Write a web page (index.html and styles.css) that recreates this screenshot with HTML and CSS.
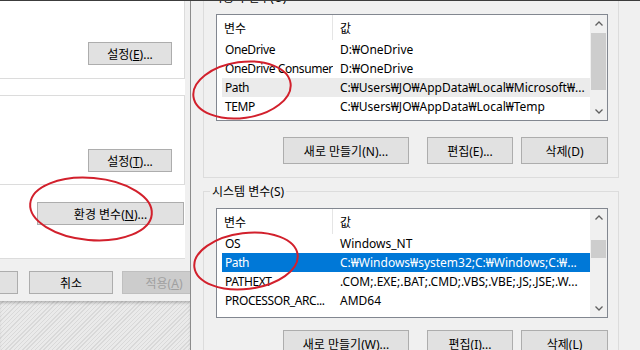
FILE: index.html
```html
<!DOCTYPE html>
<html lang="ko">
<head>
  <meta charset="UTF-8">
  <title>환경 변수</title>
  <link rel="stylesheet" href="styles.css">
</head>
<body>
  <div class="screen">
    <div class="sys-props">
      <div class="tab-page">
        <div class="group group-profile">
          <button class="btn btn-setting">설정(<u>E</u>)...</button>
        </div>
        <div class="group group-startup">
          <button class="btn btn-setting">설정(<u>T</u>)...</button>
        </div>
        <div class="env-row">
          <button class="btn btn-env">환경 변수(<u>N</u>)...</button>
        </div>
      </div>
      <div class="dialog-footer">
        <button class="btn btn-ok">확인</button>
        <button class="btn btn-cancel">취소</button>
        <button class="btn btn-apply" disabled>적용(<u>A</u>)</button>
      </div>
      <div class="desktop"></div>
    </div>

    <div class="env-dialog">
      <fieldset class="var-group user-vars">
        <legend>사용자 변수(U)</legend>
        <div class="listview">
          <div class="lv-main">
            <div class="lv-head">
              <span class="col-name">변수</span>
              <span class="col-value">값</span>
            </div>
            <div class="lv-row"><span class="col-name">OneDrive</span><span class="col-value">D:₩OneDrive</span></div>
            <div class="lv-row"><span class="col-name">OneDrive Consumer</span><span class="col-value">D:₩OneDrive</span></div>
            <div class="lv-row hover"><span class="col-name">Path</span><span class="col-value">C:₩Users₩JO₩AppData₩Local₩Microsoft₩...</span></div>
            <div class="lv-row"><span class="col-name">TEMP</span><span class="col-value">C:₩Users₩JO₩AppData₩Local₩Temp</span></div>
          </div>
          <div class="scrollbar">
            <div class="sb-arrow"><svg width="8" height="5" viewBox="0 0 8 5"><polyline points="0.5,4.5 4,1 7.5,4.5" fill="none" stroke="#606060" stroke-width="1.3"/></svg></div>
            <div class="sb-track"><div class="sb-thumb thumb-user"></div></div>
            <div class="sb-arrow"><svg width="8" height="5" viewBox="0 0 8 5"><polyline points="0.5,0.5 4,4 7.5,0.5" fill="none" stroke="#606060" stroke-width="1.3"/></svg></div>
          </div>
        </div>
        <div class="lv-buttons">
          <button class="btn btn-dlg btn-new">새로 만들기(N)...</button>
          <button class="btn btn-dlg btn-edit">편집(E)...</button>
          <button class="btn btn-dlg btn-del">삭제(D)</button>
        </div>
      </fieldset>

      <fieldset class="var-group sys-vars">
        <legend>시스템 변수(S)</legend>
        <div class="listview">
          <div class="lv-main">
            <div class="lv-head">
              <span class="col-name">변수</span>
              <span class="col-value">값</span>
            </div>
            <div class="lv-row"><span class="col-name">OS</span><span class="col-value">Windows_NT</span></div>
            <div class="lv-row selected"><span class="col-name">Path</span><span class="col-value">C:₩Windows₩system32;C:₩Windows;C:₩...</span></div>
            <div class="lv-row"><span class="col-name">PATHEXT</span><span class="col-value">.COM;.EXE;.BAT;.CMD;.VBS;.VBE;.JS;.JSE;.W...</span></div>
            <div class="lv-row"><span class="col-name">PROCESSOR_ARC...</span><span class="col-value">AMD64</span></div>
          </div>
          <div class="scrollbar">
            <div class="sb-arrow"><svg width="8" height="5" viewBox="0 0 8 5"><polyline points="0.5,4.5 4,1 7.5,4.5" fill="none" stroke="#606060" stroke-width="1.3"/></svg></div>
            <div class="sb-track"><div class="sb-thumb thumb-sys"></div></div>
            <div class="sb-arrow"><svg width="8" height="5" viewBox="0 0 8 5"><polyline points="0.5,0.5 4,4 7.5,0.5" fill="none" stroke="#606060" stroke-width="1.3"/></svg></div>
          </div>
        </div>
        <div class="lv-buttons lv-buttons-sys">
          <button class="btn btn-dlg btn-new">새로 만들기(W)...</button>
          <button class="btn btn-dlg btn-edit">편집(I)...</button>
          <button class="btn btn-dlg btn-del">삭제(L)</button>
        </div>
      </fieldset>
    </div>

    <!-- 빨간 동그라미 표시 -->
    <svg class="marks" width="640" height="350" viewBox="0 0 640 350">
      <ellipse cx="91" cy="208" rx="61" ry="31" transform="rotate(5 91 208)"/>
      <ellipse cx="242" cy="89" rx="49" ry="28" transform="rotate(-8 242 89)"/>
      <ellipse cx="246" cy="260" rx="52" ry="28" transform="rotate(-7 246 260)"/>
    </svg>
  </div>
</body>
</html>
```

FILE: styles.css
```css
* {
  box-sizing: border-box;
}
body {
  margin: 0;
  width: 640px;
  height: 350px;
  overflow: hidden;
  font-family: "Noto Sans", "Noto Sans CJK KR", sans-serif;
  font-size: 12px;
  color: #000000;
  background-color: #F0F0F0;
}
.screen {
  position: relative;
  display: flex;
  width: 640px;
  height: 350px;
  border-top: 1px solid #3C3C3C;
  overflow: hidden;
}
.btn {
  height: 23px;
  padding: 0;
  border: 1px solid #ADADAD;
  background-color: #E1E1E1;
  font: inherit;
  color: #000000;
  white-space: nowrap;
  flex: none;
}
.btn u {
  text-underline-offset: 1px;
}

/* 시스템 속성 창 */
.sys-props {
  width: 190px;
  flex: none;
  display: flex;
  flex-direction: column;
  background-color: #F0F0F0;
  overflow: hidden;
}
.tab-page {
  width: 185px;
  height: 258px;
  flex: none;
  background-color: #FFFFFF;
  border-bottom: 1px solid #DCDCDC;
}
.group {
  display: flex;
  align-items: flex-end;
  justify-content: flex-end;
  border: 1px solid #DCDCDC;
  border-left: none;
  padding: 0 12px 12px 0;
}
.group-profile {
  height: 78px;
  border-top: none;
  padding-bottom: 13px;
}
.group-startup {
  height: 90px;
  margin-top: 16px;
}
.btn-setting {
  width: 84px;
}
.env-row {
  display: flex;
  justify-content: flex-end;
  padding: 17px 1px 0 0;
}
.btn-env {
  width: 147px;
}
.dialog-footer {
  height: 42px;
  flex: none;
  display: flex;
  padding-top: 12px;
}
.dialog-footer .btn {
  width: 84px;
}
.btn-ok {
  margin-left: -66px;
}
.btn-cancel {
  margin-left: 11px;
}
.btn-apply {
  margin-left: 9px;
  background-color: #CCCCCC;
  border-color: #BFBFBF;
  color: #A0A0A0;
}
.desktop {
  flex: 1;
  background: repeating-linear-gradient(135deg, #EAEAEA 0 2px, #D9D9D9 2px 3px);
  box-shadow: inset 0 3px 3px -1px rgba(0, 0, 0, 0.22);
}

/* 환경 변수 창 */
.env-dialog {
  flex: 1;
  border-left: 1px solid #8C8C8C;
  padding-left: 12px;
  background-color: #F0F0F0;
}
.var-group {
  width: 416px;
  min-width: 0;
  margin: 0;
  border: 1px solid #DCDCDC;
  padding: 8px 0 13px 12px;
}
.var-group legend {
  padding: 0 2px;
  margin-left: -6px;
  line-height: 17px;
}
.user-vars {
  margin-top: -12px;
}
.sys-vars {
  margin-top: 5px;
}
.listview {
  width: 392px;
  display: flex;
  border: 1px solid #828790;
  background-color: #FFFFFF;
}
.user-vars .listview {
  height: 107px;
}
.sys-vars .listview {
  height: 110px;
}
.lv-main {
  flex: 1;
  min-width: 0;
  overflow: hidden;
}
.lv-head {
  display: flex;
  height: 25px;
}
.lv-head span {
  display: flex;
  align-items: center;
}
.lv-head .col-name {
  width: 116px;
  padding-left: 7px;
  border-right: 1px solid #E5E5E5;
}
.lv-head .col-value {
  padding-left: 7px;
}
.lv-row {
  display: flex;
  align-items: center;
  height: 19px;
  margin-left: 5px;
  white-space: nowrap;
}
.lv-row .col-name {
  width: 111px;
  flex: none;
  padding-left: 3px;
  letter-spacing: -0.4px;
  overflow: hidden;
}
.lv-row .col-value {
  flex: 1;
  padding-left: 7px;
  overflow: hidden;
}
.lv-row.hover {
  background-color: #EBEBEB;
}
.lv-row.selected {
  background-color: #0078D7;
  color: #FFFFFF;
}
.scrollbar {
  width: 17px;
  flex: none;
  display: flex;
  flex-direction: column;
  background-color: #F0F0F0;
}
.sb-arrow {
  height: 17px;
  display: flex;
  align-items: center;
  justify-content: center;
}
.sb-track {
  flex: 1;
  padding: 0 1px;
}
.sb-thumb {
  background-color: #CDCDCD;
}
.thumb-user {
  margin-top: 1px;
  height: 57px;
}
.thumb-sys {
  margin-top: 14px;
  height: 18px;
}
.lv-buttons {
  display: flex;
  justify-content: flex-end;
  margin-top: 16px;
  width: 392px;
}
.lv-buttons-sys {
  margin-top: 12px;
}
.btn-dlg {
  height: 27px;
}
.btn-new {
  width: 126px;
}
.btn-edit {
  width: 86px;
  margin-left: 18px;
}
.btn-del {
  width: 87px;
  margin-left: 8px;
}

/* 표시용 동그라미 */
.marks {
  position: absolute;
  top: 0;
  left: 0;
  pointer-events: none;
}
.marks ellipse {
  fill: none;
  stroke: #D2202C;
  stroke-width: 2;
}
```
